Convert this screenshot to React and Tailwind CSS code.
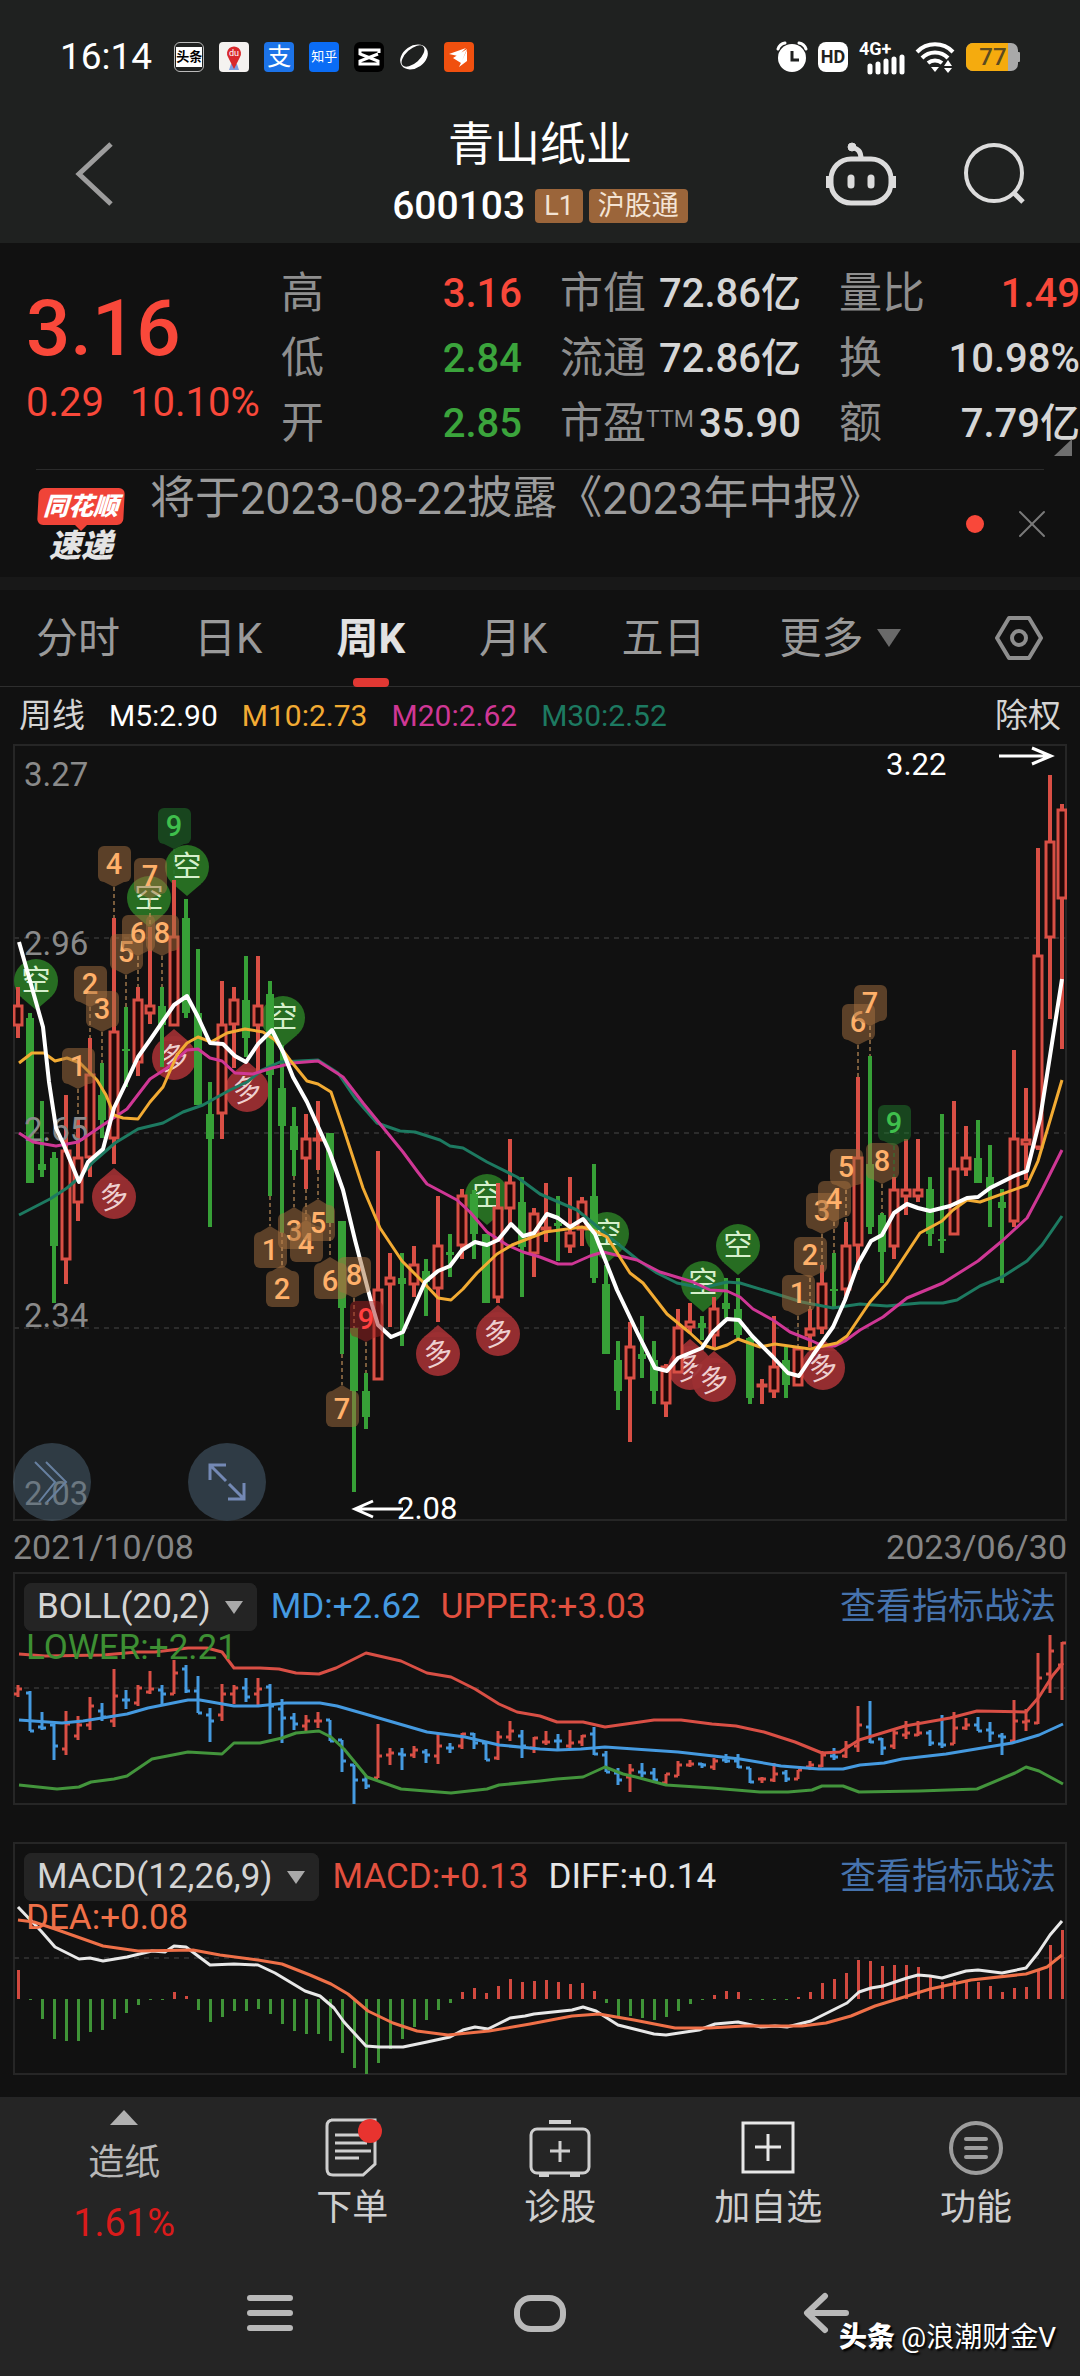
import { X } from "lucide-react";

const RED = "#d94f45";
const GREEN = "#37a037";
const BLUE = "#459ae0";

const STEP = 12;
const FIRST_X = 18;
const xAt = (i) => FIRST_X + i * STEP;

// [direction, high, body top, body bottom, low]
const candles = [
  ["r", 987, 1005, 1026, 1038], ["g", 1013, 1018, 1183, 1183], ["g", 1101, 1164, 1170, 1177], ["g", 1152, 1158, 1246, 1303],
  ["r", 1095, 1150, 1260, 1284], ["r", 1117, 1157, 1203, 1221], ["r", 1038, 1074, 1158, 1177], ["g", 1063, 1095, 1120, 1138],
  ["r", 918, 1031, 1139, 1164], ["g", 1007, 1049, 1051, 1087], ["r", 987, 999, 1063, 1076], ["r", 927, 1005, 1014, 1024],
  ["g", 987, 1006, 1025, 1067], ["r", 880, 936, 1026, 1026], ["g", 899, 918, 1013, 1018], ["g", 949, 1013, 1105, 1105],
  ["g", 1082, 1114, 1139, 1227], ["r", 981, 1024, 1114, 1139], ["r", 987, 999, 1025, 1068], ["g", 956, 1000, 1038, 1057],
  ["r", 956, 1005, 1026, 1073], ["g", 981, 994, 1075, 1196], ["g", 1045, 1088, 1126, 1233], ["g", 1107, 1126, 1150, 1176],
  ["r", 1114, 1138, 1159, 1189], ["r", 1101, 1138, 1141, 1170], ["g", 1133, 1133, 1223, 1223], ["g", 1221, 1221, 1308, 1354],
  ["g", 1328, 1328, 1391, 1492], ["g", 1373, 1391, 1417, 1429], ["r", 1151, 1289, 1380, 1380], ["r", 1253, 1277, 1285, 1327],
  ["g", 1253, 1278, 1284, 1346], ["r", 1246, 1264, 1285, 1297], ["g", 1259, 1271, 1282, 1316], ["r", 1196, 1245, 1289, 1322],
  ["g", 1234, 1252, 1255, 1277], ["r", 1189, 1195, 1246, 1259], ["g", 1190, 1194, 1234, 1259], ["g", 1234, 1234, 1303, 1303],
  ["r", 1183, 1207, 1298, 1303], ["r", 1139, 1182, 1209, 1225], ["g", 1177, 1202, 1247, 1297], ["r", 1208, 1213, 1254, 1277],
  ["r", 1183, 1227, 1230, 1242], ["g", 1196, 1223, 1226, 1261], ["r", 1177, 1232, 1247, 1253], ["r", 1197, 1201, 1230, 1246],
  ["g", 1164, 1196, 1278, 1283], ["g", 1265, 1284, 1354, 1354], ["g", 1341, 1360, 1391, 1410], ["r", 1322, 1346, 1379, 1442],
  ["g", 1316, 1354, 1359, 1378], ["g", 1341, 1360, 1391, 1404], ["r", 1364, 1366, 1404, 1417], ["r", 1309, 1327, 1373, 1373],
  ["r", 1303, 1321, 1328, 1333], ["g", 1316, 1323, 1328, 1340], ["r", 1297, 1308, 1336, 1347], ["g", 1278, 1303, 1309, 1318],
  ["g", 1278, 1309, 1335, 1338], ["g", 1337, 1338, 1398, 1404], ["r", 1379, 1384, 1387, 1404], ["r", 1316, 1366, 1392, 1398],
  ["g", 1347, 1360, 1385, 1398], ["r", 1348, 1348, 1386, 1386], ["r", 1309, 1328, 1336, 1347], ["r", 1265, 1283, 1329, 1334],
  ["g", 1253, 1289, 1291, 1307], ["r", 1222, 1245, 1290, 1298], ["r", 1077, 1157, 1246, 1270], ["g", 1056, 1164, 1227, 1234],
  ["g", 1213, 1215, 1252, 1283], ["r", 1177, 1189, 1247, 1259], ["r", 1139, 1189, 1197, 1215], ["r", 1139, 1189, 1197, 1202],
  ["g", 1177, 1189, 1234, 1246], ["g", 1114, 1239, 1241, 1253], ["r", 1101, 1168, 1235, 1235], ["r", 1126, 1157, 1170, 1176],
  ["g", 1120, 1158, 1183, 1183], ["g", 1145, 1177, 1188, 1227], ["g", 1189, 1202, 1208, 1283], ["r", 1050, 1138, 1222, 1227],
  ["r", 1088, 1139, 1145, 1180], ["r", 848, 955, 1148, 1150], ["r", 775, 841, 938, 1019], ["r", 804, 809, 899, 1049],
];

const averages = [
  {
    name: "M30",
    color: "#1d7a61",
    points: "19,1215 50,1199 67,1188 80,1177 93,1162 115,1143 138,1129 163,1123 183,1112 203,1105 230,1090 247,1082 262,1070 280,1062 318,1060 338,1073 355,1098 377,1123 400,1131 415,1132 440,1140 450,1146 463,1148 487,1162 517,1177 540,1194 577,1210 593,1223 613,1240 638,1260 657,1273 677,1283 702,1288 727,1282 740,1283 773,1293 802,1302 833,1308 860,1304 887,1306 920,1303 943,1303 957,1300 980,1286 1002,1277 1027,1261 1042,1245 1062,1216",
  },
  {
    name: "M20",
    color: "#cf3795",
    points: "19,1133 33,1142 56,1146 78,1142 100,1127 127,1109 150,1079 167,1068 187,1050 198,1049 210,1058 222,1061 235,1073 253,1074 272,1068 293,1063 318,1061 343,1077 363,1103 403,1152 417,1171 427,1184 457,1200 470,1212 487,1232 507,1245 523,1252 540,1257 558,1264 572,1264 590,1256 603,1252 637,1260 660,1272 693,1282 710,1290 727,1291 740,1297 753,1309 773,1320 790,1332 810,1340 823,1346 835,1346 845,1341 860,1330 883,1317 907,1298 943,1283 978,1261 1002,1241 1027,1218 1043,1188 1062,1150",
  },
  {
    name: "M10",
    color: "#f2ab33",
    points: "19,1063 32,1053 44,1053 55,1061 67,1058 80,1063 97,1080 106,1095 114,1115 123,1118 138,1119 150,1102 163,1087 177,1055 187,1043 198,1037 211,1042 227,1033 245,1029 263,1032 275,1040 290,1060 307,1081 318,1084 331,1092 343,1127 363,1188 380,1228 402,1261 423,1282 438,1298 451,1300 463,1289 477,1273 497,1254 512,1245 545,1232 582,1227 593,1230 607,1237 630,1273 643,1283 667,1314 690,1333 703,1345 715,1349 727,1345 738,1339 760,1347 775,1344 810,1349 837,1343 847,1336 870,1302 887,1283 920,1233 942,1221 953,1210 967,1200 980,1202 1027,1185 1038,1161 1062,1080",
  },
  {
    name: "M5",
    color: "#ffffff",
    points: "19,942 43,1027 49,1082 56,1128 63,1143 79,1182 88,1162 103,1149 114,1108 126,1083 138,1057 150,1040 174,1005 187,996 198,1017 210,1043 223,1044 235,1056 246,1062 258,1044 272,1030 283,1052 293,1077 307,1102 330,1153 343,1190 355,1240 372,1305 378,1325 391,1337 403,1332 425,1282 438,1271 450,1266 462,1250 475,1242 487,1245 498,1240 511,1224 523,1236 534,1233 547,1214 558,1218 570,1227 583,1219 595,1234 617,1290 637,1332 655,1368 667,1371 678,1358 702,1348 713,1332 727,1319 739,1320 752,1336 773,1357 788,1373 799,1376 813,1355 833,1327 845,1300 858,1264 871,1241 882,1235 894,1213 907,1204 918,1208 930,1211 950,1206 967,1198 978,1197 990,1188 1014,1176 1027,1171 1040,1119 1050,1056 1062,979",
  },
];

const shortPins = [[36, 981], [149, 898], [187, 867], [283, 1018], [487, 1196], [607, 1234], [703, 1283], [738, 1246]];
const longPins = [[114, 1197], [174, 1058], [247, 1090], [438, 1354], [498, 1334], [690, 1368], [714, 1380], [823, 1368]];

// i: candle index, y: top edge of the tag
const tags = [
  { i: 5, y: 1048, n: 1 }, { i: 6, y: 966, n: 2 }, { i: 7, y: 991, n: 3 }, { i: 8, y: 846, n: 4 },
  { i: 9, y: 934, n: 5 }, { i: 10, y: 915, n: 6 }, { i: 11, y: 858, n: 7 }, { i: 12, y: 915, n: 8 },
  { i: 13, y: 808, n: 9, tone: "green" },
  { i: 21, y: 1232, n: 1, below: true }, { i: 22, y: 1271, n: 2, below: true }, { i: 23, y: 1213, n: 3, below: true },
  { i: 24, y: 1226, n: 4, below: true }, { i: 25, y: 1205, n: 5, below: true }, { i: 26, y: 1263, n: 6, below: true },
  { i: 27, y: 1391, n: 7, below: true }, { i: 28, y: 1257, n: 8 }, { i: 29, y: 1301, n: 9, tone: "red" },
  { i: 65, y: 1275, n: 1 }, { i: 66, y: 1237, n: 2 }, { i: 67, y: 1193, n: 3 }, { i: 68, y: 1181, n: 4 },
  { i: 69, y: 1149, n: 5 }, { i: 70, y: 1004, n: 6 }, { i: 71, y: 985, n: 7 }, { i: 72, y: 1143, n: 8 },
  { i: 73, y: 1105, n: 9, tone: "green" },
];

const tagTones = {
  orange: { box: "#a5703f", text: "#ffb06a" },
  green: { box: "#1f7a2c", text: "#3fbf4c" },
  red: { box: "#a02222", text: "#ff4040" },
};

const bollLines = [
  { color: "#d94f45", points: "19,1654 45,1656 103,1655 138,1652 155,1652 188,1648 207,1648 222,1652 234,1668 260,1668 279,1669 296,1673 319,1674 336,1668 366,1653 401,1661 427,1673 451,1677 475,1689 499,1704 517,1712 540,1716 557,1722 583,1722 605,1727 654,1720 681,1720 712,1724 736,1726 764,1732 795,1742 822,1753 840,1752 859,1740 905,1726 950,1718 977,1711 1026,1712 1039,1697 1053,1675 1063,1663" },
  { color: BLUE, points: "19,1720 62,1723 83,1721 127,1714 148,1708 188,1700 200,1700 234,1706 258,1706 286,1703 320,1703 337,1706 365,1714 427,1732 465,1737 499,1745 540,1749 557,1750 581,1749 605,1747 678,1752 740,1759 781,1766 819,1769 843,1769 860,1765 884,1763 902,1759 946,1754 1012,1743 1039,1735 1063,1724" },
  { color: "#43953c", points: "19,1785 57,1789 79,1787 91,1782 114,1779 127,1776 152,1759 188,1752 222,1754 234,1743 260,1743 282,1738 296,1733 319,1731 331,1737 344,1749 367,1777 401,1789 451,1793 487,1789 499,1785 540,1781 557,1779 583,1777 605,1767 623,1774 636,1777 666,1785 712,1788 760,1792 788,1792 812,1790 822,1786 843,1786 859,1792 919,1791 977,1789 1015,1773 1026,1767 1039,1771 1063,1784" },
];

const macdBars = [
  29, -1, -20, -40, -42, -42, -33, -31, -20, -14, -6, -1, -1, 7, 3, -11, -23, -18, -12, -12, -10, -15,
  -25, -32, -35, -35, -42, -54, -69, -75, -64, -50, -40, -28, -21, -11, -4, 7, 11, 6, 13, 20, 17, 18,
  19, 17, 15, 16, 8, -4, -17, -17, -19, -21, -18, -12, -5, -1, 4, 8, 7, -1, -1, -1, -1, 2, 7, 16, 20,
  26, 39, 38, 33, 34, 34, 32, 22, 17, 19, 19, 17, 13, 7, 11, 12, 28, 54, 69,
];

const macdLines = [
  { color: "#e8e8e8", points: "18,1907 41,1931 55,1947 79,1959 90,1958 103,1961 127,1957 152,1951 165,1952 174,1946 186,1947 210,1965 234,1964 258,1965 275,1973 305,1991 320,1996 334,2008 344,2022 366,2046 379,2047 403,2047 427,2042 450,2037 463,2030 475,2027 488,2029 510,2018 525,2016 534,2014 572,2010 583,2007 596,2011 618,2025 654,2034 666,2035 699,2030 715,2024 738,2022 761,2027 775,2026 787,2027 811,2021 847,2003 859,1992 871,1988 883,1986 907,1978 918,1975 930,1976 942,1978 966,1971 978,1970 1002,1973 1026,1968 1038,1953 1050,1935 1062,1921" },
  { color: "#ef7048", points: "18,1920 34,1922 55,1929 103,1946 138,1951 193,1950 220,1955 258,1960 282,1964 310,1975 331,1984 348,1994 368,2011 393,2023 417,2031 448,2035 489,2031 530,2024 572,2016 599,2014 634,2020 675,2028 709,2028 744,2026 802,2026 826,2023 851,2016 875,2006 930,1989 971,1980 1026,1974 1047,1967 1062,1955" },
];

const tabs = ["分时", "日K", "周K", "月K", "五日"];

const stats = [
  [
    { label: "高", value: "3.16", color: "text-[#f9483a]" },
    { label: "低", value: "2.84", color: "text-[#3ba43c]" },
    { label: "开", value: "2.85", color: "text-[#3ba43c]" },
  ],
  [
    { label: "市值", value: "72.86亿", color: "text-[#d6d6d6]" },
    { label: "流通", value: "72.86亿", color: "text-[#d6d6d6]" },
    { label: "市盈", sup: "TTM", value: "35.90", color: "text-[#d6d6d6]" },
  ],
  [
    { label: "量比", value: "1.49", color: "text-[#f9483a]" },
    { label: "换", value: "10.98%", color: "text-[#d6d6d6]" },
    { label: "额", value: "7.79亿", color: "text-[#d6d6d6]" },
  ],
];

function StatusBar() {
  return (
    <div className="flex items-center pt-[36px] pl-[60px] pr-[60px]">
      <span className="text-[37px] leading-[42px] text-white">16:14</span>
      <div className="ml-[22px] flex items-center gap-[15px]">
        <span className="flex h-[30px] w-[30px] items-center justify-center rounded-md border border-[#bbb] bg-[#1f2120]">
          <span className="bg-white text-[13px] leading-[20px] font-bold text-black">头条</span>
        </span>
        <svg viewBox="0 0 30 30" className="h-[30px] w-[30px]">
          <rect width="30" height="30" rx="4" fill="#f4f2f0" />
          <path d="M10 28h10l-2-6h-6z" fill="#7d9be0" />
          <path d="M15 27 9 15a7 7 0 1 1 12 0z" fill="#d8282c" />
          <text x="15" y="14" textAnchor="middle" fontSize="9" fill="#fff">du</text>
        </svg>
        <span className="flex h-[30px] w-[30px] items-center justify-center rounded bg-[#1c73e8] text-[24px] leading-[30px] text-white">支</span>
        <span className="flex h-[30px] w-[30px] items-center justify-center rounded bg-[#0a6cf5] text-[13px] leading-[30px] text-white">知乎</span>
        <svg viewBox="0 0 30 30" className="h-[30px] w-[30px]">
          <rect width="30" height="30" rx="6" fill="#000" />
          <path d="M25 11V8H6v4l18 7v3H6v-3l18-7" fill="none" stroke="#fff" strokeWidth="3" />
        </svg>
        <svg viewBox="0 0 30 30" className="h-[30px] w-[30px]">
          <ellipse cx="15" cy="15" rx="15" ry="11" transform="rotate(-35 15 15)" fill="#fff" />
          <ellipse cx="14" cy="14" rx="14" ry="7" transform="rotate(-42 14 14)" fill="#1f2120" />
        </svg>
        <svg viewBox="0 0 30 30" className="h-[30px] w-[30px]">
          <rect width="30" height="30" rx="4" fill="#f0500f" />
          <path d="M5 12 22 6l-8 8zM9 16l14-9-6 14zM15 25l8-17v11z" fill="#fff" />
        </svg>
      </div>
      <div className="ml-auto flex items-center gap-[10px]">
        <svg viewBox="0 0 32 32" className="h-[32px] w-[32px]">
          <circle cx="16" cy="17" r="14" fill="#fff" />
          <path d="M2 8a9 9 0 0 1 7-6M30 8a9 9 0 0 0-7-6" fill="none" stroke="#fff" strokeWidth="3" strokeLinecap="round" />
          <path d="M16 10v9h7" fill="none" stroke="#1f2120" strokeWidth="3" />
        </svg>
        <span className="flex h-[30px] w-[30px] items-center justify-center rounded-lg bg-white text-[18px] leading-[30px] font-bold text-[#1f2120]">HD</span>
        <svg viewBox="0 0 46 36" className="h-[36px] w-[46px] overflow-visible">
          <text x="1" y="16" fontSize="18" fontWeight="700" fill="#fff">4G+</text>
          <path d="M12 33v-6M20 33v-8M28 33v-11M36 33v-13M44 33v-15" stroke="#fff" strokeWidth="5" strokeLinecap="round" />
        </svg>
        <svg viewBox="0 0 42 32" className="h-[32px] w-[42px]">
          <path d="M3 11a25 25 0 0 1 36 0M8 17a18 18 0 0 1 26 0M14 22a11 11 0 0 1 14 0" fill="none" stroke="#fff" strokeWidth="4" />
          <path d="M17 26h8l-4 5z" fill="#fff" />
          <path d="M30 25l4-6 4 6zM30 27h8l-4 5z" fill="#fff" />
        </svg>
        <div className="relative h-[28px] w-[54px]">
          <svg viewBox="0 0 54 28" className="h-[28px] w-[54px]">
            <rect width="52" height="28" rx="7" fill="#a9a9a9" />
            <path d="M7 0h35v28H7a7 7 0 0 1-7-7V7a7 7 0 0 1 7-7z" fill="#f5ab0e" />
            <rect x="51" y="9" width="3" height="10" rx="1" fill="#a9a9a9" />
          </svg>
          <span className="absolute inset-0 text-center text-[24px] leading-[28px] font-medium text-[#5b4a20]">77</span>
        </div>
      </div>
    </div>
  );
}

function TitleBar() {
  return (
    <div className="grid grid-cols-[1fr_auto_1fr] items-center px-[54px] pt-[34px] pb-[7px]">
      <button aria-label="返回" className="ml-[20px] w-[42px]">
        <svg viewBox="0 0 42 66" className="h-[66px] w-[42px]">
          <path d="M37 3 5 33l32 30" fill="none" stroke="#9d9d9d" strokeWidth="5" />
        </svg>
      </button>
      <div className="flex flex-col items-center">
        <h1 className="text-[46px] leading-[64px] text-white">青山纸业</h1>
        <div className="flex items-center gap-[6px] leading-[60px]">
          <span className="mr-[4px] text-[39px] font-medium text-white">600103</span>
          <span className="rounded-sm bg-[#9b653a] px-[9px] text-[27px] leading-[34px] text-[#f3e3d4]">L1</span>
          <span className="rounded-sm bg-[#9b653a] px-[9px] text-[27px] leading-[34px] text-[#f3e3d4]">沪股通</span>
        </div>
      </div>
      <div className="flex items-center justify-end gap-[66px]">
        <button aria-label="智能助手">
          <svg viewBox="0 0 70 66" className="h-[66px] w-[70px]" fill="none" stroke="#dcdcdc" strokeWidth="5">
            <rect x="5" y="18" width="60" height="44" rx="20" />
            <path d="M35 18c0-8-3-10-9-12" />
            <circle cx="26" cy="6" r="4" fill="#dcdcdc" strokeWidth="1" />
            <path d="M2 35v12M68 35v12" strokeWidth="4" />
            <path d="M25 37v7M45 37v7" strokeWidth="7" strokeLinecap="round" />
          </svg>
        </button>
        <button aria-label="搜索">
          <svg viewBox="0 0 64 66" className="h-[66px] w-[64px]" fill="none" stroke="#dcdcdc" strokeWidth="4">
            <circle cx="32" cy="32" r="28" />
            <path d="m51 51 10 10" strokeWidth="5" />
          </svg>
        </button>
      </div>
    </div>
  );
}

function Quote() {
  return (
    <section className="relative flex pt-[18px] pl-[26px]">
      <div className="w-[255px] shrink-0 text-[#f9483a]">
        <p className="pt-[16px] text-[78px] leading-[104px] font-medium">3.16</p>
        <p className="flex gap-[26px] text-[40px] leading-[44px]">
          <span>0.29</span>
          <span>10.10%</span>
        </p>
      </div>
      <div className="grid flex-1 grid-cols-3 gap-x-[38px]">
        {stats.map((column, c) => (
          <dl key={c}>
            {column.map((row) => (
              <div key={row.label} className="flex items-center justify-between text-[43px] leading-[65px] whitespace-nowrap">
                <dt className="text-[#8f8f8f]">
                  {row.label}
                  {row.sup && <sup className="text-[23px]">{row.sup}</sup>}
                </dt>
                <dd className={`text-[40px] font-medium ${row.color}`}>{row.value}</dd>
              </div>
            ))}
          </dl>
        ))}
      </div>
      <svg viewBox="0 0 18 17" className="absolute right-[8px] bottom-0 h-[17px] w-[18px]">
        <path d="M18 0v17H0z" fill="#6f6f6f" />
      </svg>
    </section>
  );
}

function News() {
  return (
    <section className="mx-[36px] mt-[13px] flex h-[108px] border-t border-[#2b2b2b]">
      <div className="mt-[18px] flex w-[90px] flex-col items-center italic">
        <span className="w-[86px] -skew-x-3 rounded-md bg-[#f04438] text-center text-[25px] leading-[37px] font-black text-white">同花顺</span>
        <svg viewBox="0 0 12 6" className="h-[6px] w-[12px]"><path d="M0 0h12L6 6z" fill="#f04438" /></svg>
        <span className="text-[32px] leading-[30px] font-black text-[#e4e4e4]">速递</span>
      </div>
      <a href="#report" className="ml-[24px] text-[45px] leading-[58px] whitespace-nowrap text-[#9b9b9b]">
        将于2023-08-22披露《2023年中报》
      </a>
      <div className="-mr-3 ml-auto flex items-center gap-6">
        <span className="h-[18px] w-[18px] rounded-full bg-[#f9483a]" />
        <button aria-label="关闭">
          <X className="h-12 w-12 text-[#7a7a7a]" strokeWidth={1} />
        </button>
      </div>
    </section>
  );
}

function PeriodTabs() {
  return (
    <nav className="flex h-[97px] items-center gap-[74px] border-b border-[#2e2e2e] px-[36px] text-[42px] leading-[97px] text-[#9a9a9a]">
      {tabs.map((tab) => (
        <button key={tab} className={tab === "周K" ? "relative font-bold text-[#e2e2e2]" : "relative"}>
          {tab}
          {tab === "周K" && (
            <span className="absolute bottom-0 left-1/2 h-[9px] w-[36px] -translate-x-1/2 rounded bg-[#e03833]" />
          )}
        </button>
      ))}
      <button className="flex items-center gap-[14px]">
        更多
        <svg viewBox="0 0 24 18" className="h-[18px] w-[24px]"><path d="M0 0h24L12 18z" fill="#6a6a6a" /></svg>
      </button>
      <button aria-label="设置" className="ml-auto">
        <svg viewBox="0 0 50 46" className="h-[46px] w-[50px]" fill="none" stroke="#8e8e8e" strokeWidth="4">
          <path d="M15 3h20l12 20-12 20H15L3 23z" strokeLinejoin="round" />
          <circle cx="25" cy="23" r="7" />
        </svg>
      </button>
    </nav>
  );
}

function Pin({ x, y, type }) {
  const isLong = type === "long";
  return (
    <g transform={`translate(${x} ${y})`} fillOpacity={isLong ? 0.95 : 1}>
      <circle r="22" fill={isLong ? "#9c2f33" : "#276d22"} />
      <path d={isLong ? "M-14-17 0-29 14-17z" : "M-14 17 0 29 14 17z"} fill={isLong ? "#9c2f33" : "#276d22"} />
      <text
        y="10"
        textAnchor="middle"
        fontSize="29"
        fill={isLong ? "#f5dada" : "#d6f0cc"}
        transform={isLong ? "rotate(-12)" : undefined}
      >
        {isLong ? "多" : "空"}
      </text>
    </g>
  );
}

function Tag({ i, y, n, below, tone = "orange" }) {
  const x = xAt(i);
  const [, high, , , low] = candles[i];
  const colors = tagTones[tone];
  return (
    <g>
      <line
        x1={x}
        x2={x}
        y1={below ? low : y + 41}
        y2={below ? y - 6 : high}
        stroke={tone === "green" ? "#2c7a35" : "#e3a869"}
        strokeDasharray="4 3"
      />
      <g fill={colors.box} opacity="0.5">
        <rect x={x - 16} y={y} width="33" height="36" rx="6" />
        <path d={below ? `M${x - 10} ${y}L${x} ${y - 6}L${x + 10} ${y}z` : `M${x - 10} ${y + 36}L${x} ${y + 41}L${x + 10} ${y + 36}z`} />
      </g>
      <text x={x} y={y + 28} textAnchor="middle" fontSize="29" fontWeight="500" fill={colors.text}>{n}</text>
    </g>
  );
}

function Candles() {
  return candles.map(([dir, high, top, bottom, low], i) => {
    const x = xAt(i);
    if (dir === "g") {
      return (
        <g key={i} fill={GREEN}>
          <rect x={x - 2} y={high} width="4" height={low - high} />
          <rect x={x - 4} y={top} width="8" height={bottom - top} />
        </g>
      );
    }
    return (
      <g key={i}>
        <rect x={x - 2} y={high} width="4" height={top - high} fill={RED} />
        <rect x={x - 2} y={bottom} width="4" height={low - bottom} fill={RED} />
        <rect x={x - 4} y={top + 1} width="8" height={Math.max(bottom - top - 2, 1)} fill="#220807" stroke={RED} strokeWidth="3" />
      </g>
    );
  });
}

function PriceChart() {
  return (
    <div className="relative">
      <svg viewBox="13 744 1054 777" className="block w-full">
        <rect x="14" y="745" width="1052" height="775" fill="none" stroke="#262626" strokeWidth="2" />
        {[938, 1133, 1328].map((y) => (
          <line key={y} x1="14" x2="1066" y1={y} y2={y} stroke="#2c2c2c" strokeWidth="2" strokeDasharray="5 5" />
        ))}
        {shortPins.map(([x, y]) => <Pin key={x} x={x} y={y} type="short" />)}
        {longPins.map(([x, y]) => <Pin key={x} x={x} y={y} type="long" />)}
        <Candles />
        <g fontSize="33" fill="#8a8a8a">
          <text x="24" y="786">3.27</text>
          <text x="24" y="955">2.96</text>
          <text x="24" y="1141">2.65</text>
          <text x="24" y="1327">2.34</text>
          <text x="24" y="1505">2.03</text>
        </g>
        {averages.map((line) => (
          <polyline key={line.name} points={line.points} fill="none" stroke={line.color} strokeWidth={line.name === "M5" ? 4 : 3} strokeLinejoin="round" />
        ))}
        {tags.map((tag) => <Tag key={tag.i} {...tag} />)}
        <g fill="none" stroke="#fff" strokeWidth="3">
          <path d="M999 756h52M1032 748l19 8-19 8" />
          <path d="M403 1509h-48M373 1501l-18 8 18 8" />
        </g>
        <g fontSize="31" fill="#fff">
          <text x="886" y="775">3.22</text>
          <text x="397" y="1519">2.08</text>
        </g>
      </svg>
      <button aria-label="展开" className="absolute bottom-0 left-0 flex h-[78px] w-[78px] items-center justify-center rounded-full bg-[#4d6678]/50">
        <svg viewBox="0 0 40 46" className="h-[46px] w-[40px]" fill="none" stroke="#6780a0" strokeWidth="2">
          <path d="M3 3l20 20L7 43M14 3l20 20L15 43" />
        </svg>
      </button>
      <button aria-label="全屏" className="absolute bottom-0 left-[175px] flex h-[78px] w-[78px] items-center justify-center rounded-full bg-[#2f3b45]">
        <svg viewBox="0 0 40 40" className="h-[40px] w-[40px]" fill="none" stroke="#7489b5" strokeWidth="3">
          <path d="M3 18V3h16M3 3l16 16M22 22l15 15M37 21v16H21" />
        </svg>
      </button>
    </div>
  );
}

// The BOLL panel shows the same prices on a flatter scale
const bollY = (y) => Math.round(1669 + (y - 918) * 0.2352);

function IndicatorPanel({ name, values, extra, children }) {
  return (
    <section className="relative">
      {children}
      <div className="absolute inset-x-[11px] top-[11px]">
        <div className="flex h-[48px] items-center text-[35px] leading-[48px] whitespace-nowrap">
          <label className="relative mr-[14px] flex items-center rounded-lg bg-[#242424]">
            <select aria-label="指标" className="field-sizing-content appearance-none rounded-lg bg-[#242424] pr-[46px] pl-[13px] text-[#d4d4d4]">
              <option>{name}</option>
            </select>
            <svg viewBox="0 0 18 13" className="pointer-events-none absolute right-[14px] h-[13px] w-[18px]">
              <path d="M0 0h18L9 13z" fill="#a9a9a9" />
            </svg>
          </label>
          <div className="flex gap-[20px]">
            {values.map((v) => (
              <span key={v.text} className={v.color}>{v.text}</span>
            ))}
          </div>
          <a href="#guide" className="ml-auto text-[36px] text-[#4673ad]">查看指标战法</a>
        </div>
        <p className={`pl-[2px] text-[35px] leading-[34px] ${extra.color}`}>{extra.text}</p>
      </div>
    </section>
  );
}

function Boll() {
  return (
    <IndicatorPanel
      name="BOLL(20,2)"
      values={[
        { text: "MD:+2.62", color: "text-[#459ae0]" },
        { text: "UPPER:+3.03", color: "text-[#e2503f]" },
      ]}
      extra={{ text: "LOWER:+2.21", color: "text-[#3d8f33]" }}
    >
      <svg viewBox="13 1572 1054 233" className="block w-full">
        <rect x="14" y="1573" width="1052" height="231" fill="none" stroke="#262626" strokeWidth="2" />
        <line x1="14" x2="1066" y1="1688" y2="1688" stroke="#2c2c2c" strokeWidth="2" strokeDasharray="5 5" />
        {candles.map(([dir, high, top, bottom, low], i) => {
          const x = xAt(i);
          const open = bollY(dir === "r" ? bottom : top);
          const close = bollY(dir === "r" ? top : bottom);
          return (
            <path
              key={i}
              d={`M${x} ${bollY(high)}V${bollY(low)}M${x - 4} ${open}H${x}M${x} ${close}H${x + 4}`}
              stroke={dir === "r" ? RED : BLUE}
              strokeWidth="3"
            />
          );
        })}
        {bollLines.map((line) => (
          <polyline key={line.color} points={line.points} fill="none" stroke={line.color} strokeWidth="3" strokeLinejoin="round" />
        ))}
      </svg>
    </IndicatorPanel>
  );
}

function Macd() {
  return (
    <IndicatorPanel
      name="MACD(12,26,9)"
      values={[
        { text: "MACD:+0.13", color: "text-[#e2503f]" },
        { text: "DIFF:+0.14", color: "text-[#e6e6e6]" },
      ]}
      extra={{ text: "DEA:+0.08", color: "text-[#ef7048]" }}
    >
      <svg viewBox="13 1842 1054 233" className="block w-full">
        <rect x="14" y="1843" width="1052" height="231" fill="none" stroke="#262626" strokeWidth="2" />
        <line x1="14" x2="1066" y1="1958" y2="1958" stroke="#2c2c2c" strokeWidth="2" strokeDasharray="5 5" />
        {macdBars.map((h, i) => (
          <rect
            key={i}
            x={xAt(i) - 1}
            y={h > 0 ? 1999 - h : 1999}
            width="3"
            height={Math.abs(h)}
            fill={h > 0 ? "#d2493f" : "#3f9437"}
          />
        ))}
        {macdLines.map((line) => (
          <polyline key={line.color} points={line.points} fill="none" stroke={line.color} strokeWidth="3" strokeLinejoin="round" />
        ))}
      </svg>
    </IndicatorPanel>
  );
}

const actions = [
  {
    label: "下单",
    icon: (
      <>
        <path d="M9 3h44v44l-12 11H11q-6 0-6-6V9q0-6 6-6" stroke="#cfcfcf" strokeWidth="3" />
        <path d="M13 18h25M13 26h32M13 34h36M13 41h24" stroke="#cfcfcf" strokeWidth="3" />
        <circle cx="48" cy="14" r="12" fill="#e8332f" stroke="none" />
      </>
    ),
  },
  {
    label: "诊股",
    icon: (
      <>
        <rect x="1" y="12" width="58" height="44" rx="6" stroke="#cfcfcf" strokeWidth="3" />
        <path d="M19 5h22M9 58h10M40 58h10" stroke="#cfcfcf" strokeWidth="4" />
        <path d="M30 24v21M20 34h20" stroke="#cfcfcf" strokeWidth="3" />
      </>
    ),
  },
  {
    label: "加自选",
    icon: (
      <>
        <rect x="5" y="6" width="50" height="49" stroke="#e8e8e8" strokeWidth="3" />
        <path d="M30 17v27M17 30h26" stroke="#e8e8e8" strokeWidth="3" />
      </>
    ),
  },
  {
    label: "功能",
    icon: (
      <>
        <circle cx="30" cy="31" r="25" stroke="#9d9d9d" strokeWidth="4" />
        <path d="M20 22h20M20 31h20M20 40h20" stroke="#9d9d9d" strokeWidth="4" strokeLinecap="round" />
      </>
    ),
  },
];

function BottomBar() {
  return (
    <footer className="flex-1 bg-[#252525] text-[36px] text-[#cfcfcf]">
      <nav className="flex h-[166px]">
        <button className="flex w-[23%] flex-col items-center pt-[13px]">
          <svg viewBox="0 0 28 15" className="h-[15px] w-[28px]"><path d="M14 0l14 15H0z" fill="#b0b0b0" /></svg>
          <span className="mt-[14px] leading-[48px] text-[#b8b8b8]">造纸</span>
          <span className="mt-[12px] text-[38px] leading-[48px] text-[#da1b1b]">1.61%</span>
        </button>
        {actions.map((action) => (
          <button key={action.label} className="flex flex-1 flex-col items-center pt-[20px]">
            <svg viewBox="0 0 60 62" className="h-[62px] w-[60px] overflow-visible" fill="none">{action.icon}</svg>
            <span className="mt-[5px] leading-[48px]">{action.label}</span>
          </button>
        ))}
      </nav>
      <div className="relative grid h-[113px] grid-cols-3 items-center justify-items-center px-[135px] pb-[14px]">
        <button aria-label="最近任务">
          <svg viewBox="0 0 46 38" className="h-[38px] w-[46px]">
            <path d="M3 4h40M3 19h40M3 34h40" stroke="#b9b9b9" strokeWidth="6" strokeLinecap="round" />
          </svg>
        </button>
        <button aria-label="主屏幕">
          <svg viewBox="0 0 52 38" className="h-[38px] w-[52px]">
            <rect x="3" y="4" width="46" height="31" rx="14" fill="none" stroke="#b9b9b9" strokeWidth="6" />
          </svg>
        </button>
        <button aria-label="后退" className="pl-8">
          <svg viewBox="0 0 46 42" className="h-[42px] w-[46px]" fill="none" stroke="#b9b9b9" strokeWidth="6" strokeLinecap="round">
            <path d="M5 21h38M22 4 4 21l18 17" strokeLinejoin="round" />
          </svg>
        </button>
        <p className="absolute right-[24px] bottom-[18px] flex gap-[6px] text-[28px] leading-[40px] text-white text-shadow-[2px_2px_2px_#000]">
          <span className="font-black">头条</span>
          <span>@浪潮财金V</span>
        </p>
      </div>
    </footer>
  );
}

export default function App() {
  return (
    <div className="flex min-h-screen flex-col overflow-x-hidden bg-[#111111] font-[Roboto,'Noto_Sans_CJK_SC',sans-serif]">
      <header className="bg-[#1f2120]">
        <StatusBar />
        <TitleBar />
      </header>

      <Quote />
      <News />
      <div className="h-[13px] bg-[#181818]" />
      <PeriodTabs />

      <div className="flex h-[57px] items-center gap-[24px] px-[19px] text-[30px] leading-[57px]">
        <span className="text-[33px] text-[#d4d4d4]">周线</span>
        <span className="text-white">M5:2.90</span>
        <span className="text-[#f2ab33]">M10:2.73</span>
        <span className="text-[#cf3795]">M20:2.62</span>
        <span className="text-[#1d7a61]">M30:2.52</span>
        <button className="ml-auto text-[33px] text-[#d4d4d4]">除权</button>
      </div>

      <main className="px-[13px]">
        <PriceChart />
        <div className="flex h-[51px] items-center justify-between text-[34px] leading-[50px] text-[#858585]">
          <span>2021/10/08</span>
          <span>2023/06/30</span>
        </div>
        <Boll />
        <div className="h-[37px]" />
        <Macd />
      </main>
      <div className="h-[22px]" />

      <BottomBar />
    </div>
  );
}
